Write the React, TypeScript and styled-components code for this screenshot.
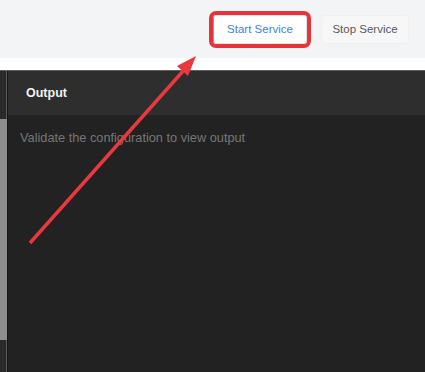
import React from "react";
import styled, { createGlobalStyle } from "styled-components";

const Global = createGlobalStyle`
  html, body { margin: 0; padding: 0; background: #ffffff; }
  body { font-family: "Liberation Sans", Arial, sans-serif; overflow: hidden; }
  #root { width: 425px; height: 372px; position: relative; }
`;

const Page = styled.div`
  width: 425px;
  height: 372px;
  display: flex;
  flex-direction: column;
  position: relative;
  background: #ffffff;
`;

const TopBar = styled.div`
  height: 58px;
  flex: 0 0 58px;
  background: #f3f4f6;
  display: flex;
  align-items: center;
  justify-content: flex-end;
  gap: 14px;
  padding-right: 16px;
  box-sizing: border-box;
`;

const Button = styled.button<{ $primary?: boolean }>`
  height: 29px;
  width: ${(p) => (p.$primary ? "94px" : "88px")};
  box-sizing: border-box;
  border-radius: 3px;
  font-family: "Liberation Sans", Arial, sans-serif;
  font-size: 11.5px;
  padding: 0;
  cursor: pointer;
  background: ${(p) => (p.$primary ? "#ffffff" : "#f7f7f8")};
  color: ${(p) => (p.$primary ? "#3f7fe6" : "#5a5a5a")};
  border: 1px solid ${(p) => (p.$primary ? "#e2e2e2" : "#f0f0f0")};
  border-left: 1px solid ${(p) => (p.$primary ? "#9a9a9a" : "#f0f0f0")};
  outline: ${(p) => (p.$primary ? "4px solid #e5343a" : "none")};
  outline-offset: 0;
`;

const Gap = styled.div`
  height: 12px;
  flex: 0 0 12px;
  background: #ffffff;
`;

const Dark = styled.div`
  flex: 1;
  display: flex;
  border-top: 1px solid #5e5e5e;
  background: #222222;
  min-height: 0;
`;

const Rail = styled.div`
  width: 7px;
  flex: 0 0 7px;
  background: #2a2a2a;
  box-shadow: inset -1px 0 0 #5a5a5a;
  display: flex;
  flex-direction: column;
`;

const Thumb = styled.div`
  margin-top: 48px;
  height: 221px;
  background: #8e8e8e;
`;

const Panel = styled.div`
  flex: 1;
  display: flex;
  flex-direction: column;
  border-left: 1px solid #161616;
`;

const PanelHeader = styled.div`
  height: 44px;
  flex: 0 0 44px;
  background: #2e2e2e;
  display: flex;
  align-items: center;
  padding-left: 18px;
  color: #f2f2f2;
  font-weight: bold;
  font-size: 12.5px;
`;

const PanelBody = styled.div`
  flex: 1;
  background: #222222;
  padding: 15px 12px;
  color: #767676;
  font-size: 12.75px;
`;

const Overlay = styled.svg`
  position: absolute;
  left: 0;
  top: 0;
  pointer-events: none;
`;

export default function App() {
  return (
    <>
      <Global />
      <Page>
        <TopBar>
          <Button $primary>Start Service</Button>
          <Button>Stop Service</Button>
        </TopBar>
        <Gap />
        <Dark>
          <Rail>
            <Thumb />
          </Rail>
          <Panel>
            <PanelHeader>Output</PanelHeader>
            <PanelBody>Validate the configuration to view output</PanelBody>
          </Panel>
        </Dark>
        <Overlay width="425" height="372" viewBox="0 0 425 372">
          <line x1="30" y1="243" x2="184" y2="70" stroke="#e8393e" strokeWidth="3.5" />
          <polygon points="196,56 188,76 177,66" fill="#e8393e" />
        </Overlay>
      </Page>
    </>
  );
}
